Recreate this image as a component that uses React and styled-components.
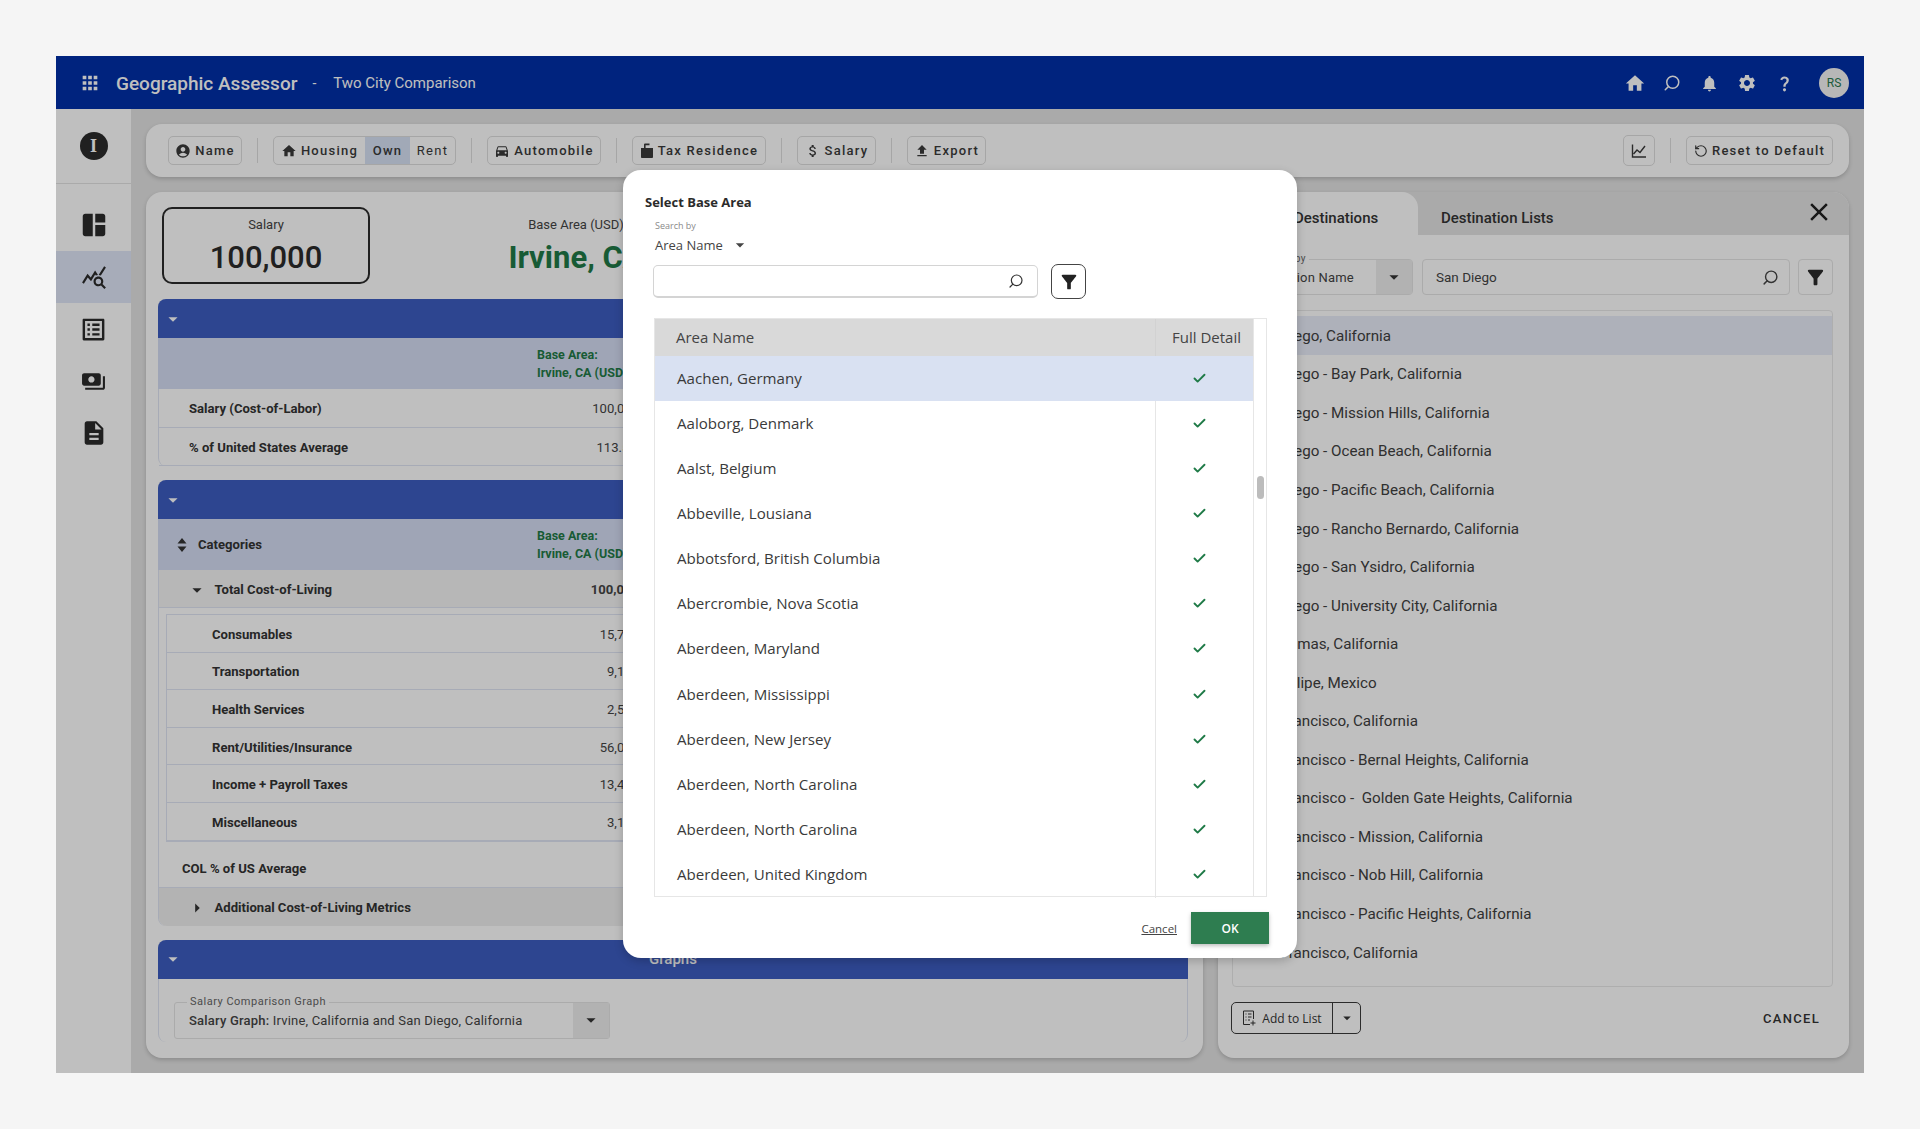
import React from 'react';
import styled, { createGlobalStyle } from 'styled-components';
import { Check, RotateCcw, Search } from 'lucide-react';
import {
  MdAccountCircle,
  MdApps,
  MdArrowDropDown,
  MdArrowRight,
  MdAttachMoney,
  MdClose,
  MdDescription,
  MdDirectionsCar,
  MdFileUpload,
  MdFilterAlt,
  MdHome,
  MdListAlt,
  MdNotifications,
  MdPayments,
  MdQueryStats,
  MdQuestionMark,
  MdSettings,
  MdSpaceDashboard,
} from 'react-icons/md';

const GlobalStyle = createGlobalStyle`
  * { box-sizing: border-box; }
  html, body { margin: 0; padding: 0; }
  body {
    background: #f5f5f5;
    font-family: Roboto, "Liberation Sans", sans-serif;
    color: #333;
  }
`;

const Page = styled.div`
  width: 1920px;
  height: 1129px;
  padding: 56px;
  overflow: hidden;
`;

const Frame = styled.div`
  position: relative;
  width: 1808px;
  height: 1017px;
  background: #e3e3e3;
  display: flex;
  flex-direction: column;
`;

const Dim = styled.div`
  position: absolute;
  inset: 0;
  background: rgba(0, 0, 0, 0.25);
`;

/* header */
const Header = styled.header`
  height: 53px;
  flex: none;
  background: #002fa9;
  color: #fff;
  display: flex;
  align-items: center;
  padding: 1px 15px 0 23px;
`;

const Title = styled.span`
  font-size: 19px;
  font-weight: 500;
  margin-left: 15px;
`;

const Dash = styled.span`
  font-size: 14px;
  margin: 0 17px 0 15px;
`;

const SubTitle = styled.span`
  font-size: 15px;
`;

const HeaderIcons = styled.div`
  margin-left: auto;
  display: flex;
  align-items: center;
  gap: 15.5px;
`;

const HeaderIcon = styled.span`
  display: flex;
  width: 22px;
  justify-content: center;
  transform: ${(p) => (p.$flip ? 'scaleX(-1)' : 'none')};
`;

const Avatar = styled.span`
  width: 30px;
  height: 30px;
  border-radius: 50%;
  background: #f4f4f4;
  color: #2a7a4f;
  font-size: 12px;
  display: flex;
  align-items: center;
  justify-content: center;
  margin-left: 8px;
`;

const Body = styled.div`
  flex: 1;
  display: flex;
  min-height: 0;
`;

/* sidebar */
const Sidebar = styled.nav`
  width: 75px;
  flex: none;
  background: #fff;
`;

const SideTop = styled.div`
  height: 75px;
  border-bottom: 1px solid #e3e3e3;
  margin-bottom: 15px;
  display: flex;
  align-items: center;
  justify-content: center;
`;

const InfoBadge = styled.span`
  width: 28px;
  height: 28px;
  border-radius: 50%;
  background: #2b2b2b;
  color: #fff;
  font: bold 18px "Liberation Serif", serif;
  display: flex;
  align-items: center;
  justify-content: center;
`;

const SideItem = styled.div`
  height: 52px;
  display: flex;
  align-items: center;
  justify-content: center;
  color: #2b2b2b;
  background: ${(p) => (p.$active ? '#dfe6f7' : 'transparent')};
`;

/* content */
const Content = styled.main`
  flex: 1;
  padding: 15px;
  display: flex;
  flex-direction: column;
  gap: 15px;
  min-width: 0;
`;

const Toolbar = styled.div`
  height: 53px;
  flex: none;
  background: #fff;
  border-radius: 16px;
  box-shadow: 0 2px 4px rgba(0, 0, 0, 0.18);
  display: flex;
  align-items: center;
  gap: 15px;
  padding: 0 16px 0 22px;
`;

const ToolButton = styled.div`
  width: ${(p) => p.$width}px;
  height: ${(p) => (p.$square ? 31 : 29)}px;
  border: 1px solid #dedede;
  border-radius: 5px;
  background: #fff;
  display: flex;
  align-items: center;
  justify-content: center;
  gap: 4px;
  font-size: 13px;
  font-weight: 500;
  letter-spacing: 1.25px;
  color: #3a3a3a;
  white-space: nowrap;
  margin-left: ${(p) => (p.$push ? 'auto' : '0')};
`;

const ToolGroup = styled.div`
  height: 29px;
  border: 1px solid #dedede;
  border-radius: 5px;
  display: flex;
  align-items: stretch;
  overflow: hidden;
  font-size: 13px;
  font-weight: 500;
  letter-spacing: 1.25px;
  color: #3a3a3a;
`;

const GroupPart = styled.span`
  display: flex;
  align-items: center;
  gap: 4px;
  width: ${(p) => p.$width}px;
  justify-content: center;
  font-weight: ${(p) => (p.$plain ? 400 : 500)};
  background: ${(p) => (p.$on ? '#d7e2f4' : 'transparent')};
`;

const Sep = styled.span`
  width: 1px;
  height: 25px;
  background: #dedede;
`;

const Panels = styled.div`
  flex: 1;
  display: flex;
  gap: 15px;
  min-height: 0;
`;

const LeftPanel = styled.section`
  width: 1057px;
  flex: none;
  background: #fff;
  border-radius: 16px;
  box-shadow: 0 2px 4px rgba(0, 0, 0, 0.18);
  padding: 15px 15px 0 12px;
  display: flex;
  flex-direction: column;
  gap: 14px;
`;

const Summary = styled.div`
  display: flex;
  margin: 0 0 1px 4px;
`;

const SalaryBox = styled.div`
  width: 208px;
  height: 77px;
  border: 2px solid #2b2b2b;
  border-radius: 10px;
  text-align: center;
  padding-top: 7px;
`;

const SummaryLabel = styled.div`
  font-size: 13px;
  line-height: 18px;
  color: #444;
`;

const SummaryValue = styled.div`
  font-size: 31px;
  line-height: 42px;
  margin-top: 3px;
  font-weight: 500;
  color: ${(p) => p.$color || '#2b2b2b'};
  ${(p) => p.$bold && 'font-weight: 700;'}
`;

const BaseBlock = styled.div`
  margin-left: 131px;
  width: 150px;
  padding-top: 9px;
  text-align: center;
  white-space: nowrap;
`;

const Section = styled.div`
  border-left: 1px solid #dfe5f3;
  border-right: 1px solid #dfe5f3;
  border-radius: 8px;
  ${(p) => p.$fill && 'flex: 1; margin-bottom: 16px;'}
`;

const Bar = styled.div`
  height: 39px;
  margin: 0 -1px;
  background: #3d5dc0;
  border-radius: 8px 8px 0 0;
  color: #fff;
  display: flex;
  align-items: center;
  padding-left: 4px;
`;

const BarTitle = styled.span`
  flex: 1;
  padding-right: 26px;
  text-align: center;
  font-size: 15px;
  font-weight: 500;
`;

const SubHead = styled.div`
  height: 51px;
  background: #d5ddf3;
  display: grid;
  grid-template-columns: 379px 1fr;
  align-items: center;
  margin: 0 -1px;
`;

const CatCell = styled.div`
  display: flex;
  align-items: center;
  gap: 11px;
  padding-left: 19px;
  font-size: 13.1px;
  font-weight: 700;
  color: #333;
`;

const BaseHead = styled.div`
  font-size: 12.5px;
  line-height: 18px;
  font-weight: 700;
  color: #1f7a47;
  white-space: nowrap;
`;

const Row = styled.div`
  height: ${(p) => p.$h || 38}px;
  display: grid;
  grid-template-columns: ${(p) => p.$label || 379}px 101px;
  align-items: center;
  padding-top: 2px;
  background: ${(p) => p.$bg || 'transparent'};
  border-bottom: 1px solid #dfe5f3;
  ${(p) => p.$round && 'border-radius: 0 0 8px 8px; border-bottom: none;'}
`;

const RowLabel = styled.div`
  display: flex;
  align-items: center;
  padding-left: ${(p) => p.$pad}px;
  font-size: 13.1px;
  font-weight: 700;
  color: #333;
  white-space: nowrap;
`;

const RowValue = styled.div`
  text-align: right;
  font-size: 13.1px;
  font-weight: ${(p) => (p.$bold ? 700 : 400)};
  color: #444;
`;

const Inner = styled.div`
  margin: 6px 0 7px 7px;
  border: 1px solid #dfe5f3;
  border-right: none;
`;

const GraphField = styled.div`
  position: relative;
  width: 436px;
  height: 37px;
  margin: 23px 0 0 15px;
  border: 1px solid #e4e4e4;
  border-radius: 3px;
  display: flex;
  align-items: center;
  font-size: 13px;
  color: #444;
`;

const FloatLabel = styled.span`
  position: absolute;
  top: -8px;
  left: ${(p) => p.$left || 12}px;
  background: #fff;
  padding: 0 3px;
  font-size: ${(p) => p.$size || 11}px;
  line-height: 14px;
  letter-spacing: 0.5px;
  color: #666;
`;

const FieldText = styled.span`
  flex: 1;
  padding-left: 14px;
  white-space: nowrap;
  letter-spacing: 0.2px;
  overflow: hidden;
`;

const FieldCaret = styled.span`
  width: 36px;
  flex: none;
  align-self: stretch;
  background: #eeeeee;
  display: flex;
  align-items: center;
  justify-content: center;
  color: #333;
`;

/* right panel */
const RightPanel = styled.section`
  flex: 1;
  background: #fff;
  border-radius: 16px;
  box-shadow: 0 2px 4px rgba(0, 0, 0, 0.18);
  display: flex;
  flex-direction: column;
  overflow: hidden;
  min-width: 0;
`;

const Tabs = styled.div`
  height: 43px;
  flex: none;
  background: #e3e3e3;
  display: flex;
  align-items: stretch;
  font-size: 15px;
  font-weight: 500;
  color: #333;
`;

const Tab = styled.div`
  width: ${(p) => p.$width}px;
  display: flex;
  align-items: center;
  padding-left: ${(p) => p.$pad}px;
  padding-top: 8px;
  background: ${(p) => (p.$on ? '#fff' : 'transparent')};
  border-radius: 0 16px 0 0;
`;

const CloseBtn = styled.span`
  margin-left: auto;
  margin-right: 15px;
  display: flex;
  align-items: center;
  padding-bottom: 3px;
  color: #222;
`;

const RightBody = styled.div`
  flex: 1;
  display: flex;
  flex-direction: column;
  padding: 24px 16px 0 14px;
  min-height: 0;
`;

const SearchRow = styled.div`
  display: flex;
  gap: 8px;
  height: 36px;
  flex: none;
`;

const SelectField = styled.div`
  position: relative;
  width: 181px;
  margin-right: 1px;
  border: 1px solid #e4e4e4;
  border-radius: 4px;
  display: flex;
  align-items: center;
  font-size: 13px;
  color: #444;
`;

const InputField = styled.div`
  flex: 1;
  border: 1px solid #e4e4e4;
  border-radius: 4px;
  display: flex;
  align-items: center;
  justify-content: space-between;
  padding: 0 10px 0 13px;
  font-size: 13.5px;
  color: #444;
`;

const FlipIcon = styled.span`
  display: flex;
  transform: scaleX(-1);
`;

const SquareBtn = styled.div`
  width: 35px;
  flex: none;
  border: 1px solid #e4e4e4;
  border-radius: 4px;
  display: flex;
  align-items: center;
  justify-content: center;
  color: #2b2b2b;
`;

const CityList = styled.div`
  height: 677px;
  flex: none;
  margin-top: 15px;
  padding-top: 5px;
  border: 1px solid #e9e9e9;
  border-radius: 4px;
`;

const City = styled.div`
  height: 38.55px;
  display: flex;
  align-items: center;
  padding: 1px 0 0 18px;
  font-size: 15.2px;
  white-space: pre;
  color: #404040;
  background: ${(p) => (p.$on ? '#e9edf9' : 'transparent')};
`;

const RightFoot = styled.div`
  display: flex;
  align-items: center;
  justify-content: space-between;
  margin: 15px 0 0 -1px;
  padding-right: 13px;
`;

const AddBtn = styled.div`
  width: 130px;
  height: 32px;
  border: 1px solid #3a3a3a;
  border-radius: 5px;
  display: flex;
  align-items: center;
  font-family: "Open Sans", sans-serif;
  font-size: 12px;
  font-weight: 400;
  color: #333;
`;

const AddMain = styled.span`
  flex: 1;
  display: flex;
  align-items: center;
  justify-content: center;
  gap: 6px;
`;

const AddCaret = styled.span`
  width: 28px;
  align-self: stretch;
  border-left: 1px solid #3a3a3a;
  display: flex;
  align-items: center;
  justify-content: center;
`;

const CancelText = styled.span`
  font-size: 13px;
  font-weight: 500;
  letter-spacing: 1.3px;
  color: #333;
`;

/* dialog */
const Modal = styled.div`
  position: absolute;
  left: 567px;
  top: 114px;
  width: 674px;
  height: 788px;
  background: #fff;
  border-radius: 18px;
  box-shadow: 0 3px 10px rgba(0, 0, 0, 0.2);
  padding: 23px 28px 0 22px;
  font-family: "Open Sans", sans-serif;
  color: #333;
`;

const ModalTitle = styled.div`
  font-size: 13px;
  line-height: 18px;
  font-weight: 700;
  color: #2b2b2b;
`;

const SearchBy = styled.div`
  margin: 9px 0 0 10px;
  font-size: 9px;
  line-height: 12px;
  color: #8a8a8a;
`;

const ByValue = styled.div`
  margin: 3px 0 0 10px;
  height: 20px;
  display: flex;
  align-items: center;
  font-size: 13px;
  color: #444;
`;

const ModalSearch = styled.div`
  display: flex;
  gap: 13px;
  margin: 10px 0 0 8px;
`;

const ModalInput = styled.div`
  width: 385px;
  height: 33px;
  border: 1px solid #d4d4d4;
  border-bottom-width: 2px;
  border-radius: 5px;
  display: flex;
  align-items: center;
  justify-content: flex-end;
  padding-right: 13px;
  color: #333;
`;

const ModalFilter = styled.div`
  width: 35px;
  height: 35px;
  margin-top: -1px;
  border: 1px solid #444;
  border-radius: 7px;
  display: flex;
  align-items: center;
  justify-content: center;
  color: #222;
`;

const AreaTable = styled.div`
  position: relative;
  width: 613px;
  height: 579px;
  margin: 19px 0 0 9px;
  border: 1px solid #e6e6e6;
  padding-right: 13px;
`;

const AreaHead = styled.div`
  height: 37px;
  background: #d9d9d9;
  display: grid;
  grid-template-columns: 500px 1fr;
  align-items: center;
  font-size: 15px;
  color: #444;
  span:first-child { padding: 0 0 2px 21px; }
  span:last-child { padding-left: 16px; border-left: 1px solid #d2d2d2; line-height: 37px; }
`;

const AreaRow = styled.div`
  height: 45.15px;
  display: grid;
  grid-template-columns: 500px 1fr;
  align-items: stretch;
  font-size: 15.1px;
  color: #3a3a3a;
  background: ${(p) => (p.$on ? '#d9e1f2' : 'transparent')};
`;

const AreaName = styled.div`
  display: flex;
  align-items: center;
  padding: 0 0 2px 22px;
`;

const AreaCheck = styled.div`
  display: flex;
  align-items: center;
  justify-content: center;
  padding: 0 10px 1px 0;
  border-left: 1px solid ${(p) => (p.$on ? 'transparent' : '#e6e6e6')};
  color: #1f7a47;
`;

const Scrollbar = styled.div`
  position: absolute;
  top: 0;
  bottom: 0;
  right: 0;
  width: 13px;
  border-left: 1px solid #e6e6e6;
`;

const Thumb = styled.div`
  position: absolute;
  top: 157px;
  left: 3px;
  width: 7px;
  height: 23px;
  border-radius: 4px;
  background: #bcbcbc;
`;

const ModalFoot = styled.div`
  display: flex;
  align-items: center;
  justify-content: flex-end;
  gap: 14px;
  margin: 15px 0 0;
`;

const CancelLink = styled.span`
  font-size: 11.5px;
  text-decoration: underline;
  color: #444;
`;

const OkBtn = styled.div`
  width: 78px;
  height: 32px;
  background: #2e7d50;
  box-shadow: 0 2px 4px rgba(0, 0, 0, 0.25);
  color: #fff;
  font-size: 12px;
  font-weight: 600;
  display: flex;
  align-items: center;
  justify-content: center;
`;

const TaxIcon = () => (
  <svg width="14" height="15" viewBox="0 0 14 15" fill="currentColor">
    <path d="M1 5h3V1.500C4 1 4.400.6 5 .6h4.500v1.600H5.600V5H13v9c0 .5-.4 1-1 1H2c-.6 0-1-.5-1-1z" />
  </svg>
);

const ChartIcon = () => (
  <svg width="16" height="16" viewBox="0 0 16 16" fill="none" stroke="currentColor" strokeWidth="1.4">
    <path d="M1.500 1.500v12.500h13.500" />
    <path d="M2.500 11l3.500-4 3 2.500 5-6.500" />
  </svg>
);

const SortIcon = () => (
  <svg width="10" height="14" viewBox="0 0 10 14" fill="currentColor">
    <path d="M5 0l4.500 5.500h-9zM5 14L.5 8.500h9z" />
  </svg>
);

const AddListIcon = () => (
  <svg width="14" height="16" viewBox="0 0 14 16" fill="none" stroke="currentColor" strokeWidth="1">
    <path d="M8 14.500H1.500V1h10v8" />
    <path d="M3.500 4h1M6 4h3.500M3.500 7h1M6 7h3.500M3.500 10h1M6 10h2M11 10.500v5M8.500 13h5" />
  </svg>
);

const FIRST_ROWS = [
  ['Salary (Cost-of-Labor)', '100,000'],
  ['% of United States Average', '113.5%'],
];

const CATEGORIES = [
  ['Consumables', '15,700'],
  ['Transportation', '9,100'],
  ['Health Services', '2,500'],
  ['Rent/Utilities/Insurance', '56,000'],
  ['Income + Payroll Taxes', '13,400'],
  ['Miscellaneous', '3,100'],
];

const CITIES = [
  'San Diego, California',
  'San Diego - Bay Park, California',
  'San Diego - Mission Hills, California',
  'San Diego - Ocean Beach, California',
  'San Diego - Pacific Beach, California',
  'San Diego - Rancho Bernardo, California',
  'San Diego - San Ysidro, California',
  'San Diego - University City, California',
  'San Tomas, California',
  'San Felipe, Mexico',
  'San Francisco, California',
  'San Francisco - Bernal Heights, California',
  'San Francisco -  Golden Gate Heights, California',
  'San Francisco - Mission, California',
  'San Francisco - Nob Hill, California',
  'San Francisco - Pacific Heights, California',
  'San Francisco, California',
];

const AREAS = [
  'Aachen, Germany',
  'Aaloborg, Denmark',
  'Aalst, Belgium',
  'Abbeville, Lousiana',
  'Abbotsford, British Columbia',
  'Abercrombie, Nova Scotia',
  'Aberdeen, Maryland',
  'Aberdeen, Mississippi',
  'Aberdeen, New Jersey',
  'Aberdeen, North Carolina',
  'Aberdeen, North Carolina',
  'Aberdeen, United Kingdom',
];

const BaseLabel = () => (
  <BaseHead>
    Base Area:
    <br />
    Irvine, CA (USD)
  </BaseHead>
);

const App = () => {
  return (
    <Page>
      <GlobalStyle />
      <Frame>
        <Header>
          <MdApps size={22} />
          <Title>Geographic Assessor</Title>
          <Dash>-</Dash>
          <SubTitle>Two City Comparison</SubTitle>
          <HeaderIcons>
            <HeaderIcon><MdHome size={23} /></HeaderIcon>
            <HeaderIcon $flip><Search size={18} strokeWidth={2} /></HeaderIcon>
            <HeaderIcon><MdNotifications size={19} /></HeaderIcon>
            <HeaderIcon><MdSettings size={20} /></HeaderIcon>
            <HeaderIcon><MdQuestionMark size={19} /></HeaderIcon>
            <Avatar>RS</Avatar>
          </HeaderIcons>
        </Header>
        <Body>
          <Sidebar>
            <SideTop>
              <InfoBadge>I</InfoBadge>
            </SideTop>
            <SideItem><MdSpaceDashboard size={30} /></SideItem>
            <SideItem $active><MdQueryStats size={26} /></SideItem>
            <SideItem><MdListAlt size={29} /></SideItem>
            <SideItem><MdPayments size={25} /></SideItem>
            <SideItem><MdDescription size={28} /></SideItem>
          </Sidebar>
          <Content>
            <Toolbar>
              <ToolButton $width={74}><MdAccountCircle size={16} /> Name</ToolButton>
              <Sep />
              <ToolGroup>
                <GroupPart $width={91}><MdHome size={16} /> Housing</GroupPart>
                <GroupPart $width={45} $on>Own</GroupPart>
                <GroupPart $width={45} $plain>Rent</GroupPart>
              </ToolGroup>
              <Sep />
              <ToolButton $width={114}><MdDirectionsCar size={16} /> Automobile</ToolButton>
              <Sep />
              <ToolButton $width={134}><TaxIcon /> Tax Residence</ToolButton>
              <Sep />
              <ToolButton $width={79}><MdAttachMoney size={16} /> Salary</ToolButton>
              <Sep />
              <ToolButton $width={79}><MdFileUpload size={16} /> Export</ToolButton>
              <ToolButton $push $square $width={32}><ChartIcon /></ToolButton>
              <Sep />
              <ToolButton $width={147}><RotateCcw size={14} strokeWidth={2} /> Reset to Default</ToolButton>
            </Toolbar>
            <Panels>
              <LeftPanel>
                <Summary>
                  <SalaryBox>
                    <SummaryLabel>Salary</SummaryLabel>
                    <SummaryValue>100,000</SummaryValue>
                  </SalaryBox>
                  <BaseBlock>
                    <SummaryLabel>Base Area (USD)</SummaryLabel>
                    <SummaryValue $color="#1f7a47" $bold>Irvine, CA</SummaryValue>
                  </BaseBlock>
                </Summary>
                <Section>
                  <Bar><MdArrowDropDown size={22} /><BarTitle>Salary</BarTitle></Bar>
                  <SubHead>
                    <span />
                    <BaseLabel />
                  </SubHead>
                  {FIRST_ROWS.map(([name, value]) => (
                    <Row key={name} $h={38.5}>
                      <RowLabel $pad={30}>{name}</RowLabel>
                      <RowValue>{value}</RowValue>
                    </Row>
                  ))}
                </Section>
                <Section>
                  <Bar><MdArrowDropDown size={22} /><BarTitle>Cost-of-Living</BarTitle></Bar>
                  <SubHead>
                    <CatCell><SortIcon /> Categories</CatCell>
                    <BaseLabel />
                  </SubHead>
                  <Row $bg="#f4f4f4">
                    <RowLabel $pad={27}><MdArrowDropDown size={22} />&nbsp;&nbsp;Total Cost-of-Living</RowLabel>
                    <RowValue $bold>100,000</RowValue>
                  </Row>
                  <Inner>
                    {CATEGORIES.map(([name, value]) => (
                      <Row key={name} $h={37.6} $label={371}>
                        <RowLabel $pad={45}>{name}</RowLabel>
                        <RowValue>{value}</RowValue>
                      </Row>
                    ))}
                  </Inner>
                  <Row $h={39}>
                    <RowLabel $pad={23}>COL % of US Average</RowLabel>
                  </Row>
                  <Row $bg="#efefef" $round>
                    <RowLabel $pad={27}><MdArrowRight size={22} />&nbsp;&nbsp;Additional Cost-of-Living Metrics</RowLabel>
                  </Row>
                </Section>
                <Section $fill>
                  <Bar><MdArrowDropDown size={22} /><BarTitle>Graphs</BarTitle></Bar>
                  <GraphField>
                    <FloatLabel>Salary Comparison Graph</FloatLabel>
                    <FieldText><b style={{ fontWeight: 500 }}>Salary Graph:</b> Irvine, California and San Diego, California</FieldText>
                    <FieldCaret><MdArrowDropDown size={22} /></FieldCaret>
                  </GraphField>
                </Section>
              </LeftPanel>
              <RightPanel>
                <Tabs>
                  <Tab $on $width={200} $pad={76}>Destinations</Tab>
                  <Tab $width={200} $pad={23}>Destination Lists</Tab>
                  <CloseBtn><MdClose size={30} /></CloseBtn>
                </Tabs>
                <RightBody>
                  <SearchRow>
                    <SelectField>
                      <FloatLabel $left={22} $size={10}>Search by</FloatLabel>
                      <FieldText>Destination Name</FieldText>
                      <FieldCaret><MdArrowDropDown size={22} /></FieldCaret>
                    </SelectField>
                    <InputField>
                      San Diego
                      <FlipIcon><Search size={17} strokeWidth={2} /></FlipIcon>
                    </InputField>
                    <SquareBtn><MdFilterAlt size={23} /></SquareBtn>
                  </SearchRow>
                  <CityList>
                    {CITIES.map((city, i) => (
                      <City key={i} $on={i === 0}>{city}</City>
                    ))}
                  </CityList>
                  <RightFoot>
                    <AddBtn>
                      <AddMain><AddListIcon /> Add to List</AddMain>
                      <AddCaret><MdArrowDropDown size={18} /></AddCaret>
                    </AddBtn>
                    <CancelText>CANCEL</CancelText>
                  </RightFoot>
                </RightBody>
              </RightPanel>
            </Panels>
          </Content>
        </Body>
        <Dim />
        <Modal>
          <ModalTitle>Select Base Area</ModalTitle>
          <SearchBy>Search by</SearchBy>
          <ByValue>Area Name&nbsp;&nbsp;<MdArrowDropDown size={20} /></ByValue>
          <ModalSearch>
            <ModalInput>
              <FlipIcon><Search size={16} strokeWidth={1.8} /></FlipIcon>
            </ModalInput>
            <ModalFilter><MdFilterAlt size={22} /></ModalFilter>
          </ModalSearch>
          <AreaTable>
            <AreaHead>
              <span>Area Name</span>
              <span>Full Detail</span>
            </AreaHead>
            {AREAS.map((area, i) => (
              <AreaRow key={i} $on={i === 0}>
                <AreaName>{area}</AreaName>
                <AreaCheck $on={i === 0}><Check size={15} strokeWidth={3} /></AreaCheck>
              </AreaRow>
            ))}
            <Scrollbar><Thumb /></Scrollbar>
          </AreaTable>
          <ModalFoot>
            <CancelLink>Cancel</CancelLink>
            <OkBtn>OK</OkBtn>
          </ModalFoot>
        </Modal>
      </Frame>
    </Page>
  );
};

export default App;
